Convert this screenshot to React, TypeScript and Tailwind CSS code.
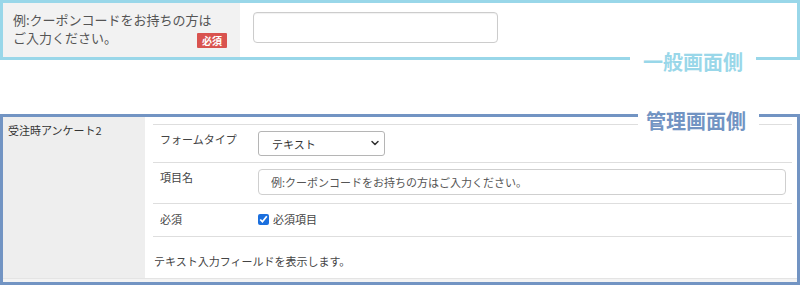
import { ChevronDown } from "lucide-react";

const font = "font-['Noto_Sans_CJK_JP','Noto_Sans',sans-serif]";

export default function App() {
  return (
    <div className={`w-[800px] h-[285px] bg-white ${font}`}>
      {/* 一般画面側 */}
      <section className="relative flex h-[60px] border-[3px] border-[#99d7e9]">
        <div className="w-[237px] bg-[#f2f2f2] pl-[10px] pr-[13px] pt-[8px] text-[13px] leading-[18px] text-[#555]">
          <div>例:クーポンコードをお持ちの方は</div>
          <div className="flex items-end justify-between">
            <span>ご入力ください。</span>
            <span className="mb-[-1px] flex h-[15px] w-[30px] items-center justify-center rounded-[1px] bg-[#d9534f] text-[10px] font-bold leading-none text-white">
              必須
            </span>
          </div>
        </div>
        <div className="flex-1 pl-[13px] pt-[9px]">
          <input
            type="text"
            className="h-[31px] w-[245px] rounded-[4px] border border-[#ccc] bg-white shadow-[inset_0_1px_1px_rgba(0,0,0,0.06)] outline-none"
          />
        </div>
        <div className="absolute right-[41px] top-[49px] bg-white px-[13px] text-[20px] font-bold leading-[20px] text-[#99d7e9]">
          一般画面側
        </div>
      </section>

      {/* 管理画面側 */}
      <section className="relative mt-[54px] flex h-[171px] flex-col border-[3px] border-[#7294c3] bg-[#f3f3f3]">
        <div className="flex h-[162px] border-b border-[#e4e4e4] bg-white">
          <div className="w-[142px] bg-[#eeeeee] pl-[5px] pt-[5px] text-[11px] leading-[16px] text-[#333]">
            受注時アンケート2
          </div>
          <div className="ml-[8px] mr-[5px] mt-[7px] flex-1 text-[11px] leading-[16px] text-[#444]">
            <div className="flex h-[39px] border-y border-[#dedede]">
              <div className="w-[105px] pl-[7px] pt-[6px]">フォームタイプ</div>
              <div className="pt-[6px]">
                <div className="relative h-[25px] w-[127px]">
                  <select className="h-full w-full appearance-none rounded-[3px] border border-[#b5b5b5] bg-white pl-[13px] text-[11px] text-[#333] outline-none">
                    <option>テキスト</option>
                  </select>
                  <ChevronDown
                    size={12}
                    strokeWidth={3}
                    className="pointer-events-none absolute right-[4px] top-[6px] text-[#333]"
                  />
                </div>
              </div>
            </div>
            <div className="flex h-[41px] border-b border-[#dedede]">
              <div className="w-[105px] pl-[7px] pt-[6px]">項目名</div>
              <div className="flex-1 pt-[6px]">
                <input
                  type="text"
                  defaultValue="例:クーポンコードをお持ちの方はご入力ください。"
                  className="h-[26px] w-[528px] rounded-[4px] border border-[#cfcfcf] bg-white pl-[12px] text-[11px] text-[#555] outline-none"
                />
              </div>
            </div>
            <div className="flex h-[33px] border-b border-[#dedede]">
              <div className="w-[105px] pl-[7px] pt-[7px]">必須</div>
              <label className="flex items-center gap-[4px] pt-[7px] self-start">
                <input
                  type="checkbox"
                  defaultChecked
                  className="m-0 h-[11px] w-[11px] accent-[#1b6fde]"
                />
                <span>必須項目</span>
              </label>
            </div>
            <div className="pl-[1px] pt-[16px]">テキスト入力フィールドを表示します。</div>
          </div>
        </div>
        <div className="absolute right-[38px] top-[-6px] bg-white pl-[8px] pr-[13px] text-[20px] font-bold leading-[20px] text-[#7294c3]">
          管理画面側
        </div>
      </section>
    </div>
  );
}
